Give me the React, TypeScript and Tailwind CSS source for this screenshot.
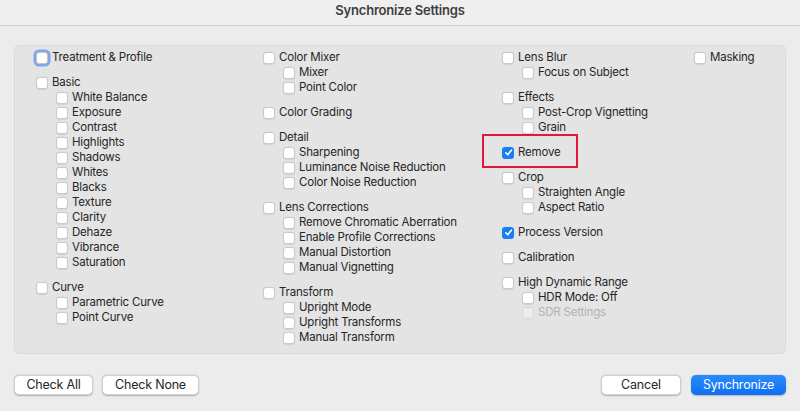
import React from "react";

type Item = { label: string; checked?: boolean; disabled?: boolean; focus?: boolean; children?: Item[] };

const col1: Item[][] = [
  [{ label: "Treatment & Profile", focus: true }],
  [
    {
      label: "Basic",
      children: [
        "White Balance", "Exposure", "Contrast", "Highlights", "Shadows", "Whites", "Blacks",
        "Texture", "Clarity", "Dehaze", "Vibrance", "Saturation",
      ].map((l) => ({ label: l })),
    },
  ],
  [{ label: "Curve", children: [{ label: "Parametric Curve" }, { label: "Point Curve" }] }],
];

const col2: Item[][] = [
  [{ label: "Color Mixer", children: [{ label: "Mixer" }, { label: "Point Color" }] }],
  [{ label: "Color Grading" }],
  [{ label: "Detail", children: [{ label: "Sharpening" }, { label: "Luminance Noise Reduction" }, { label: "Color Noise Reduction" }] }],
  [
    {
      label: "Lens Corrections",
      children: [
        { label: "Remove Chromatic Aberration" },
        { label: "Enable Profile Corrections" },
        { label: "Manual Distortion" },
        { label: "Manual Vignetting" },
      ],
    },
  ],
  [{ label: "Transform", children: [{ label: "Upright Mode" }, { label: "Upright Transforms" }, { label: "Manual Transform" }] }],
];

const col3: Item[][] = [
  [{ label: "Lens Blur", children: [{ label: "Focus on Subject" }] }],
  [{ label: "Effects", children: [{ label: "Post-Crop Vignetting" }, { label: "Grain" }] }],
  [{ label: "Remove", checked: true }],
  [{ label: "Crop", children: [{ label: "Straighten Angle" }, { label: "Aspect Ratio" }] }],
  [{ label: "Process Version", checked: true }],
  [{ label: "Calibration" }],
  [{ label: "High Dynamic Range", children: [{ label: "HDR Mode: Off" }, { label: "SDR Settings", disabled: true }] }],
];

const col4: Item[][] = [[{ label: "Masking" }]];

function Box({ checked, disabled, focus }: { checked?: boolean; disabled?: boolean; focus?: boolean }) {
  if (checked) {
    return (
      <span className="w-[12px] h-[12px] rounded-[3px] bg-[#1a7df5] flex items-center justify-center shrink-0">
        <svg width="9" height="9" viewBox="0 0 10 10" fill="none">
          <path d="M2 5.3 L4.2 7.6 L8.2 2.4" stroke="white" strokeWidth="1.7" strokeLinecap="round" strokeLinejoin="round" />
        </svg>
      </span>
    );
  }
  return (
    <span
      className={
        "w-[12px] h-[12px] rounded-[3px] shrink-0 " +
        (disabled
          ? "bg-[#ececec] border border-[#d8d8d8]"
          : focus
          ? "bg-white border border-[#c4c4c4] shadow-[0_0_0_2.5px_#7ea6ea]"
          : "bg-white border border-[#c9c9c9] shadow-[0_0.5px_1px_rgba(0,0,0,0.08)]")
      }
    />
  );
}

function Row({ item, indent }: { item: Item; indent?: boolean }) {
  return (
    <div className={"flex items-center h-[15px] gap-[4px] " + (indent ? "pl-[20px]" : "")}>
      <Box checked={item.checked} disabled={item.disabled} focus={item.focus} />
      <span className={"whitespace-nowrap " + (item.disabled ? "text-[#b3b3b3]" : "text-[#262626]")}>{item.label}</span>
    </div>
  );
}

function Column({ groups }: { groups: Item[][] }) {
  return (
    <div className="flex flex-col gap-[10px]">
      {groups.map((g, i) => (
        <div key={i} className="flex flex-col">
          {g.map((it) => (
            <React.Fragment key={it.label}>
              <Row item={it} />
              {it.children?.map((c) => (
                <Row key={c.label} item={c} indent />
              ))}
            </React.Fragment>
          ))}
        </div>
      ))}
    </div>
  );
}

export default function App() {
  return (
    <div
      className="w-[800px] h-[411px] bg-[#ececec] flex flex-col overflow-hidden"
      style={{ fontFamily: "Inter, 'Liberation Sans', sans-serif" }}
    >
      <div className="h-[26px] pb-[3px] bg-[#efefef] border-b border-[#cdcdcd] flex items-center justify-center shrink-0">
        <span className="text-[13px] font-semibold text-[#3d3d3d] tracking-[-0.2px]">Synchronize Settings</span>
      </div>
      <div className="mx-[14px] mt-[19px] h-[309px] relative rounded-[5px] bg-[#e4e4e4] border border-[#d9d9d9] pt-[4px] pl-[21px] text-[11.5px] leading-[15px] tracking-[-0.2px]">
        <div className="grid grid-cols-[227px_239px_192px_1fr]">
          <Column groups={col1} />
          <Column groups={col2} />
          <Column groups={col3} />
          <Column groups={col4} />
        </div>
        <div className="absolute left-[467px] top-[88px] w-[96px] h-[34px] border-2 border-[#e0193a]" />
      </div>
      <div className="flex items-center px-[14px] mt-[21px] text-[12.5px] tracking-[-0.2px] text-[#262626]">
        <button className="w-[79px] h-[20px] bg-white rounded-[5px] shadow-[0_0.5px_1.5px_rgba(0,0,0,0.25)] border-[0.5px] border-[#d0d0d0]">
          Check All
        </button>
        <button className="ml-[9px] w-[97px] h-[20px] bg-white rounded-[5px] shadow-[0_0.5px_1.5px_rgba(0,0,0,0.25)] border-[0.5px] border-[#d0d0d0]">
          Check None
        </button>
        <div className="flex-1" />
        <button className="w-[80px] h-[20px] bg-white rounded-[5px] shadow-[0_0.5px_1.5px_rgba(0,0,0,0.25)] border-[0.5px] border-[#d0d0d0]">
          Cancel
        </button>
        <button className="ml-[10px] w-[95px] h-[20px] rounded-[5px] text-white bg-gradient-to-b from-[#2a8bfa] to-[#0d6ff2] shadow-[0_0.5px_1.5px_rgba(0,0,0,0.25)]">
          Synchronize
        </button>
      </div>
    </div>
  );
}
